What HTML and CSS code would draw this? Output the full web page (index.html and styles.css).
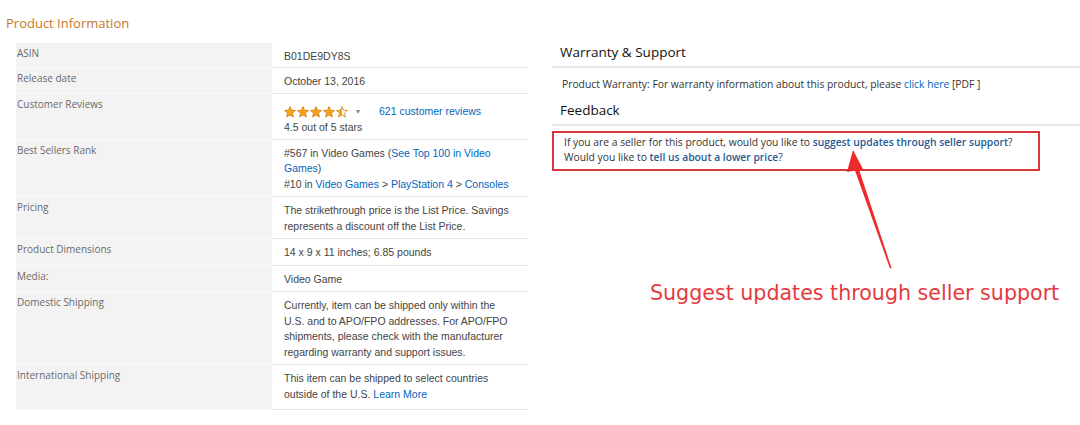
FILE: index.html
```html
<!DOCTYPE html>
<html lang="en">
<head>
  <meta charset="UTF-8">
  <title>Product Information</title>
  <link rel="stylesheet" href="styles.css">
</head>
<body>
  <div class="page">
    <section class="product-info">
      <h2 class="section-title">Product Information</h2>
      <table class="info-table">
        <tr class="first">
          <th>ASIN</th>
          <td>B01DE9DY8S</td>
        </tr>
        <tr>
          <th>Release date</th>
          <td>October 13, 2016</td>
        </tr>
        <tr>
          <th>Customer Reviews</th>
          <td class="reviews">
            <div class="rating">
              <span class="stars">
                <svg width="64" height="12" viewBox="0 0 64 12">
                  <defs>
                    <path id="star" d="M6 0.6 L7.6 4.2 L11.5 4.5 L8.5 7.1 L9.4 11 L6 8.9 L2.6 11 L3.5 7.1 L0.5 4.5 L4.4 4.2 Z"/>
                    <clipPath id="half"><rect x="0" y="0" width="6" height="12"/></clipPath>
                  </defs>
                  <use href="#star" x="0" fill="#f4a41c" stroke="#d08010" stroke-width="0.8"/>
                  <use href="#star" x="13" fill="#f4a41c" stroke="#d08010" stroke-width="0.8"/>
                  <use href="#star" x="26" fill="#f4a41c" stroke="#d08010" stroke-width="0.8"/>
                  <use href="#star" x="39" fill="#f4a41c" stroke="#d08010" stroke-width="0.8"/>
                  <g transform="translate(52 0)">
                    <use href="#star" fill="#fff" stroke="#d08010" stroke-width="0.8"/>
                    <use href="#star" fill="#f4a41c" clip-path="url(#half)"/>
                  </g>
                </svg>
              </span>
              <span class="caret">&#9662;</span>
              <a href="#">621 customer reviews</a>
            </div>
            4.5 out of 5 stars
          </td>
        </tr>
        <tr>
          <th>Best Sellers Rank</th>
          <td>
            #567 in Video Games (<a href="#">See Top 100 in Video Games</a>)<br>
            #10 in <a href="#">Video Games</a> &gt; <a href="#">PlayStation 4</a> &gt; <a href="#">Consoles</a>
          </td>
        </tr>
        <tr>
          <th>Pricing</th>
          <td>The strikethrough price is the List Price. Savings represents a discount off the List Price.</td>
        </tr>
        <tr>
          <th>Product Dimensions</th>
          <td>14 x 9 x 11 inches; 6.85 pounds</td>
        </tr>
        <tr>
          <th>Media:</th>
          <td>Video Game</td>
        </tr>
        <tr>
          <th>Domestic Shipping</th>
          <td>Currently, item can be shipped only within the U.S. and to APO/FPO addresses. For APO/FPO shipments, please check with the manufacturer regarding warranty and support issues.</td>
        </tr>
        <tr class="last">
          <th>International Shipping</th>
          <td>This item can be shipped to select countries outside of the U.S. <a href="#">Learn More</a></td>
        </tr>
      </table>
    </section>

    <section class="support">
      <h3 class="support-title">Warranty &amp; Support</h3>
      <p class="support-text">Product Warranty: For warranty information about this product, please <a href="#">click here</a> [PDF ]</p>
      <h3 class="support-title">Feedback</h3>
      <div class="feedback-box">
        If you are a seller for this product, would you like to <a href="#" class="strong">suggest updates through seller support</a>?<br>
        Would you like to <a href="#" class="strong">tell us about a lower price</a>?
      </div>
      <p class="callout">Suggest updates through seller support</p>

      <svg class="arrow" width="60" height="130" viewBox="0 0 60 130">
        <path d="M13 0 L24 21 L19 19.5 L51.5 118 L50 118.5 L15 20.5 L7 22 Z" fill="#ee2b2b"/>
      </svg>
    </section>
  </div>
</body>
</html>
```

FILE: styles.css
```css
body {
  margin: 0;
  background: #fff;
  font-family: "Liberation Sans", Arial, sans-serif;
  color: #333;
}

a {
  color: #0066c0;
  text-decoration: none;
}

.page {
  display: flex;
}

/* left column */
.product-info {
  width: 546px;
  padding-left: 6px;
}

.section-title {
  margin: 14px 0 11px;
  font-family: "Open Sans", sans-serif;
  font-size: 13px;
  font-weight: normal;
  color: #c7782c;
  line-height: 18px;
}

.info-table {
  margin-left: 10px;
  width: 512px;
  border-collapse: collapse;
  font-size: 10.5px;
}

.info-table th {
  width: 255px;
  padding: 2px 0 0 1px;
  background: #f3f3f3;
  border-bottom: 1px solid #fafafa;
  text-align: left;
  vertical-align: top;
  font-family: "Open Sans", sans-serif;
  font-weight: normal;
  font-size: 10px;
  line-height: 16px;
  color: #6a6a6a;
}

.info-table td {
  padding: 6px 12px 4px;
  border-bottom: 1px solid #e7e7e7;
  vertical-align: top;
  line-height: 15.5px;
  color: #444;
}

.info-table tr.first td {
  padding-top: 6px;
  padding-bottom: 2px;
}

.info-table td.reviews {
  padding-bottom: 3px;
}

.info-table tr.last td {
  padding-bottom: 7px;
}

.rating {
  display: flex;
  align-items: center;
  height: 16px;
  margin-top: 4px;
}

.stars svg {
  display: block;
}

.caret {
  margin: 0 19px 0 8px;
  font-size: 8px;
  color: #888;
}

/* right column */
.support {
  position: relative;
  width: 528px;
}

.support-title {
  margin: 0;
  padding: 0 0 4px 8px;
  font-family: "Open Sans", sans-serif;
  font-size: 13.5px;
  font-weight: normal;
  color: #111;
  line-height: 20px;
  border-bottom: 2px solid #e6e6e6;
}

.support-title:first-child {
  margin-top: 42px;
}

.support-text {
  margin: 0;
  padding: 8px 0 8px 10px;
  font-family: "Open Sans", sans-serif;
  font-size: 10.3px;
  line-height: 16px;
  color: #333;
}

.support-title + .feedback-box {
  margin-top: 5px;
}

.feedback-box {
  width: 474px;
  padding: 2px 0 4px 10px;
  border: 2px solid #d7363b;
  font-family: "Open Sans", sans-serif;
  font-size: 10.3px;
  line-height: 15px;
  color: #333;
}

.feedback-box .strong {
  font-weight: 600;
  color: #1f5a94;
}

.callout {
  margin: 110px 0 0 98px;
  font-family: "DejaVu Sans", Verdana, sans-serif;
  font-size: 20.6px;
  color: #e53a3d;
  white-space: nowrap;
}

.arrow {
  position: absolute;
  left: 288px;
  top: 150px;
}
```
